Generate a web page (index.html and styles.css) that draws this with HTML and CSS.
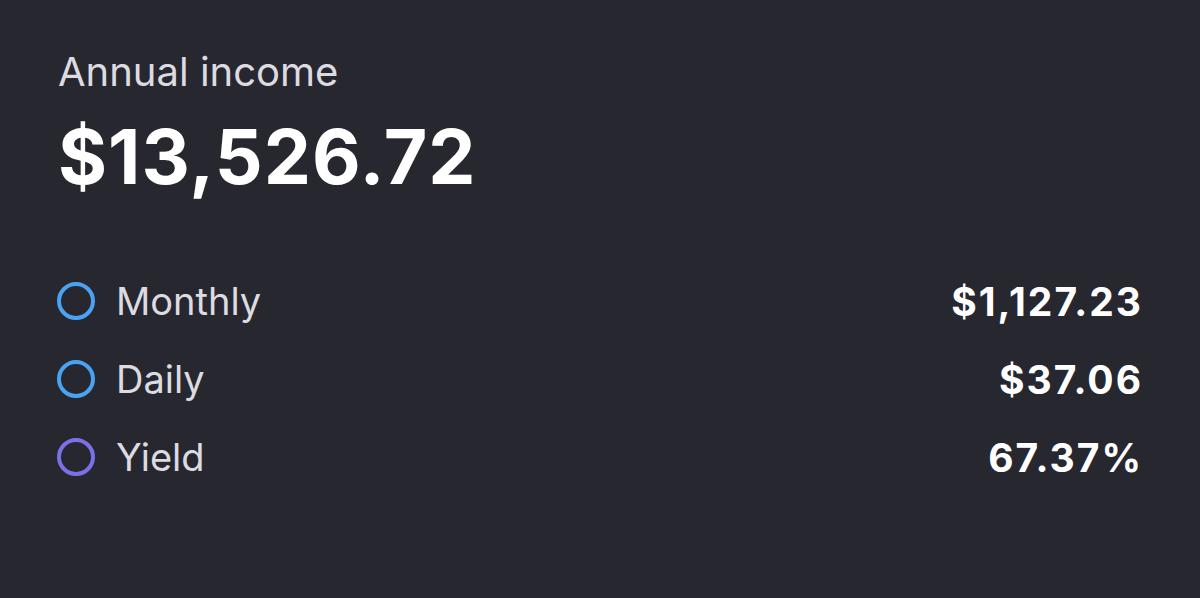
FILE: index.html
```html
<!DOCTYPE html>
<html lang="en">
<head>
<meta charset="UTF-8">
<meta name="viewport" content="width=device-width, initial-scale=1.0">
<title>Annual income</title>
<link rel="stylesheet" href="styles.css">
</head>
<body>
<div class="card">
    <div class="label">Annual income</div>
    <div class="total">$13,526.72</div>

    <ul class="rows">
        <li class="row">
            <span class="dot blue"></span>
            <span class="name">Monthly</span>
            <span class="value">$1,127.23</span>
        </li>
        <li class="row">
            <span class="dot blue"></span>
            <span class="name">Daily</span>
            <span class="value">$37.06</span>
        </li>
        <li class="row">
            <span class="dot purple"></span>
            <span class="name">Yield</span>
            <span class="value">67.37%</span>
        </li>
    </ul>
</div>
</body>
</html>
```

FILE: styles.css
```css
html, body {
    height: 100%;
}
body {
    margin: 0;
    background-color: #272730;
    color: #fff;
    font-family: 'Inter', 'Roboto', sans-serif;
}
.card {
    padding: 48px 59px 0 57px;
}
.label {
    font-size: 40px;
    line-height: 48px;
    color: #dcdce0;
    margin-left: 1px;
}
.total {
    margin-top: 16px;
    margin-left: 1px;
    font-size: 75px;
    line-height: 90px;
    font-weight: 700;
    letter-spacing: 1px;
}
.rows {
    list-style: none;
    margin: 60px 0 0;
    padding: 0;
}
.row {
    display: flex;
    align-items: center;
    height: 78px;
}
.dot {
    width: 30px;
    height: 30px;
    border: 4px solid;
    border-radius: 50%;
    margin-right: 21px;
}
.blue {
    border-color: #4aa2f2;
}
.purple {
    border-color: #7b70e8;
}
.name {
    flex: 1;
    font-size: 38px;
    color: #dcdce0;
}
.value {
    font-size: 39px;
    font-weight: 700;
    letter-spacing: 2px;
    margin-right: -2px;
}
```
